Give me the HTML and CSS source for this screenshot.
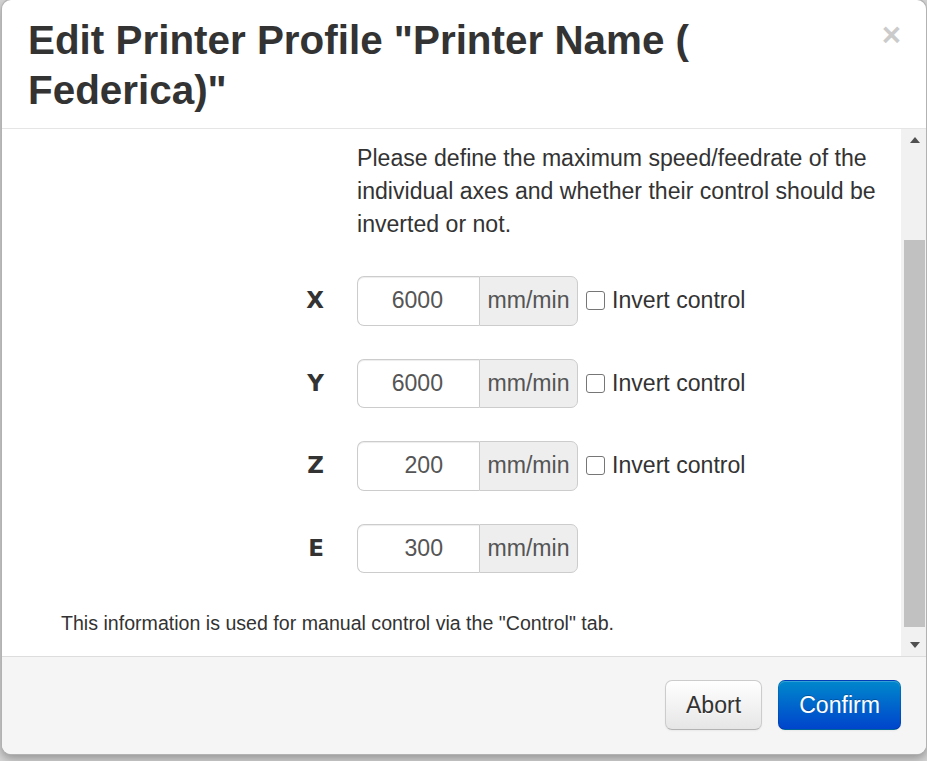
FILE: index.html
```html
<!DOCTYPE html>
<html lang="en">
<head>
<meta charset="utf-8">
<title>Edit Printer Profile</title>
<link rel="stylesheet" href="styles.css">
</head>
<body>
<div class="modal">
  <div class="modal-header">
    <h3 class="modal-title">Edit Printer Profile "Printer Name ( Federica)"</h3>
    <button class="close" type="button">&times;</button>
  </div>
  <div class="modal-body">
    <div class="body-content">
      <div class="controls intro-wrap">
        <p class="intro">Please define the maximum speed/feedrate of the individual axes and whether their control should be inverted or not.</p>
      </div>
      <div class="control-group">
        <label class="control-label">X</label>
        <div class="controls">
          <div class="input-group">
            <input class="num-input" type="text" value="6000">
            <span class="addon">mm/min</span>
          </div>
          <label class="checkbox"><input type="checkbox"><span>Invert control</span></label>
        </div>
      </div>
      <div class="control-group">
        <label class="control-label">Y</label>
        <div class="controls">
          <div class="input-group">
            <input class="num-input" type="text" value="6000">
            <span class="addon">mm/min</span>
          </div>
          <label class="checkbox"><input type="checkbox"><span>Invert control</span></label>
        </div>
      </div>
      <div class="control-group">
        <label class="control-label">Z</label>
        <div class="controls">
          <div class="input-group">
            <input class="num-input" type="text" value="200">
            <span class="addon">mm/min</span>
          </div>
          <label class="checkbox"><input type="checkbox"><span>Invert control</span></label>
        </div>
      </div>
      <div class="control-group">
        <label class="control-label">E</label>
        <div class="controls">
          <div class="input-group">
            <input class="num-input" type="text" value="300">
            <span class="addon">mm/min</span>
          </div>
        </div>
      </div>
      <p class="help">This information is used for manual control via the "Control" tab.</p>
    </div>
    <div class="scrollbar">
      <div class="sb-btn"><svg width="10" height="6" viewBox="0 0 10 6"><path d="M0 6 L5 0 L10 6 Z" fill="#505050"/></svg></div>
      <div class="sb-gap"></div>
      <div class="sb-thumb"></div>
      <div class="sb-rest"></div>
      <div class="sb-btn"><svg width="10" height="6" viewBox="0 0 10 6"><path d="M0 0 L10 0 L5 6 Z" fill="#505050"/></svg></div>
    </div>
  </div>
  <div class="modal-footer">
    <button class="btn" type="button">Abort</button>
    <button class="btn btn-primary" type="button">Confirm</button>
  </div>
</div>
</body>
</html>
```
FILE: styles.css
```css
* { box-sizing: border-box; }
html, body { margin: 0; padding: 0; }
body {
  background: #d6d6d6;
  font-family: "Liberation Sans", Arial, sans-serif;
  color: #333;
  height: 761px;
  overflow: hidden;
}
.modal {
  margin: -1px 0 0 1px;
  width: 926px;
  background: #fff;
  border: 1px solid rgba(0, 0, 0, 0.3);
  border-radius: 10px;
  box-shadow: 0 4px 10px rgba(0, 0, 0, 0.3);
  overflow: hidden;
}
.modal-header {
  display: flex;
  align-items: flex-start;
  padding: 15px 25px 13px 26px;
  border-bottom: 1px solid #e5e5e5;
}
.modal-title {
  flex: 1;
  margin: 0;
  font-size: 40.4px;
  line-height: 50px;
  font-weight: bold;
  color: #333;
}
.close {
  margin-top: 3px;
  padding: 0;
  border: 0;
  background: transparent;
  font-family: "Liberation Sans", Arial, sans-serif;
  font-size: 33px;
  line-height: 33px;
  font-weight: bold;
  color: #000;
  opacity: 0.2;
}
.modal-body {
  display: flex;
  height: 527px;
}
.body-content {
  flex: 1;
  padding: 13px 10px 0 25px;
  font-size: 23.1px;
  line-height: 33px;
}
.controls { margin-left: 330px; display: flex; align-items: center; }
.intro { margin: 0 0 35px; }
.control-group {
  display: flex;
  align-items: center;
  margin-bottom: 33px;
}
.control-group .controls { margin-left: 33px; }
.control-label {
  width: 297px;
  text-align: right;
  font-family: "DejaVu Sans", sans-serif;
  font-weight: bold;
  font-size: 23px;
  color: #333;
}
.input-group { display: flex; height: 49.5px; }
.num-input {
  width: 122px;
  height: 100%;
  margin: 0;
  border: 1px solid #ccc;
  border-right: 0;
  border-radius: 7px 0 0 7px;
  padding: 0 36px 0 6px;
  text-align: right;
  font-family: "Liberation Sans", Arial, sans-serif;
  font-size: 23.1px;
  color: #555;
  background: #fff;
  box-shadow: inset 0 1px 1px rgba(0, 0, 0, 0.075);
  outline: none;
}
.addon {
  width: 99px;
  height: 100%;
  display: flex;
  align-items: center;
  justify-content: center;
  background: #eee;
  border: 1px solid #ccc;
  border-radius: 0 7px 7px 0;
  color: #555;
  font-size: 23.1px;
}
.checkbox {
  display: flex;
  align-items: center;
  margin-left: 8px;
  gap: 7px;
  color: #333;
}
.checkbox input {
  appearance: none;
  -webkit-appearance: none;
  width: 19px;
  height: 19px;
  margin: 0;
  border: 1.5px solid #767676;
  border-radius: 3px;
  background: #fff;
}
.help {
  margin: 36px 0 0 34px;
  font-size: 19.6px;
  line-height: 28px;
}
.scrollbar {
  width: 25px;
  display: flex;
  flex-direction: column;
  background: #f1f1f1;
}
.sb-btn {
  height: 22px;
  display: flex;
  align-items: center;
  justify-content: center;
  padding-left: 2px;
}
.sb-gap { height: 89px; }
.sb-thumb {
  height: 387px;
  margin: 0 1px 0 3px;
  background: #c1c1c1;
}
.sb-rest { flex: 1; }
.modal-footer {
  display: flex;
  justify-content: flex-end;
  gap: 16px;
  padding: 23px 25px 24px;
  background: #f5f5f5;
  border-top: 1px solid #ddd;
}
.btn {
  height: 50px;
  padding: 0 20px;
  font-family: "Liberation Sans", Arial, sans-serif;
  font-size: 23.1px;
  color: #333;
  text-shadow: 0 1px 1px rgba(255, 255, 255, 0.75);
  background: linear-gradient(to bottom, #ffffff, #e6e6e6);
  border: 1px solid #ccc;
  border-bottom-color: #b3b3b3;
  border-radius: 7px;
  box-shadow: inset 0 1px 0 rgba(255, 255, 255, 0.2), 0 1px 2px rgba(0, 0, 0, 0.05);
}
.btn-primary {
  color: #fff;
  text-shadow: 0 -1px 0 rgba(0, 0, 0, 0.25);
  background: linear-gradient(to bottom, #0088cc, #0044cc);
  border-color: rgba(0, 0, 0, 0.1) rgba(0, 0, 0, 0.1) rgba(0, 0, 0, 0.25);
}
```
